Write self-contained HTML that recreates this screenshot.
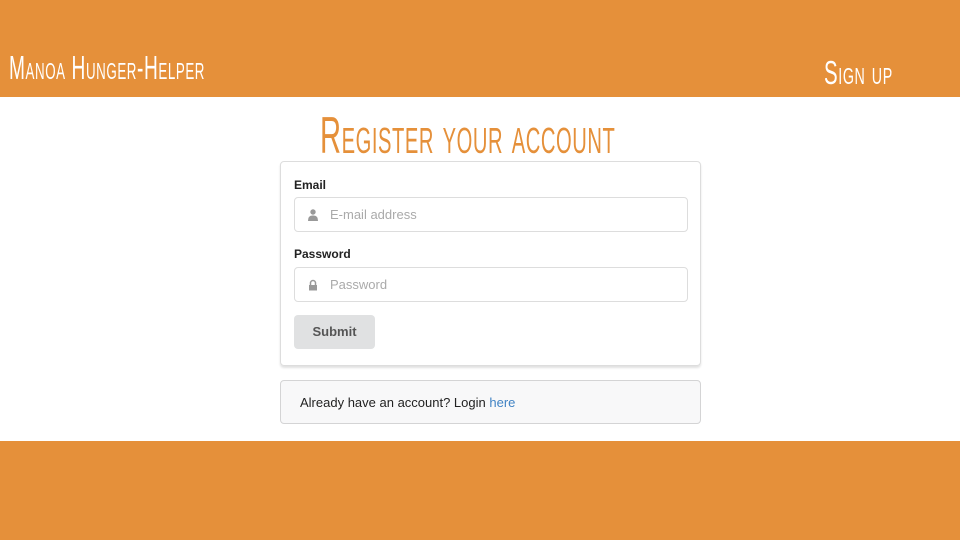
<!DOCTYPE html>
<html><head><style>
*{margin:0;padding:0;box-sizing:border-box}
body{width:960px;height:540px;background:#fff;font-family:"Liberation Sans",sans-serif;position:relative;overflow:hidden}
.hdr{position:absolute;left:0;top:0;width:960px;height:97px;background:#e5903a}
.ftr{position:absolute;left:0;top:441px;width:960px;height:99px;background:#e5903a}
.sc{position:absolute;font-family:"Liberation Sans Narrow","Liberation Sans",sans-serif;font-variant:small-caps;transform-origin:left top;white-space:nowrap;letter-spacing:1px}
.card{position:absolute;left:280px;top:161px;width:421px;height:205px;border:1px solid #ddd;border-radius:4px;box-shadow:0 2px 2px rgba(0,0,0,.12)}
.lbl{position:absolute;left:13px;font-size:12px;font-weight:bold;color:#222}
.inp{position:absolute;left:13px;width:394px;height:35px;border:1px solid #ddd;border-radius:4px}
.inp span{position:absolute;left:35px;top:9px;font-size:13px;color:#aaa}
.btn{position:absolute;left:13px;top:153px;width:81px;height:34px;background:#e0e1e2;border-radius:4px;font-size:13px;font-weight:bold;color:#555;text-align:center;line-height:34px}
.msg{position:absolute;left:280px;top:380px;width:421px;height:44px;border:1px solid #d4d4d5;border-radius:4px;background:#f8f8f9;font-size:13px;color:#222;padding:14px 0 0 19px}
</style></head><body>
<div class="hdr"></div>
<div class="sc" style="left:9px;top:49px;font-size:33px;color:#fff;transform:scaleX(.58)">Manoa Hunger-Helper</div>
<div class="sc" style="left:824px;top:54px;font-size:33px;color:#fff;transform:scaleX(.62)">Sign up</div>
<div class="sc" style="left:320px;top:106px;font-size:52px;color:#e5903a;transform:scaleX(.56)">Register your account</div>
<div class="card">
<div class="lbl" style="top:16px">Email</div>
<div class="inp" style="top:35px"><svg style="position:absolute;left:13px;top:11px" width="10" height="12" viewBox="0 0 10 12"><circle cx="5" cy="3" r="2.7" fill="#999"/><path d="M0 12 Q0 6 5 6.5 Q10 6 10 12Z" fill="#999"/></svg><span>E-mail address</span></div>
<div class="lbl" style="top:85px">Password</div>
<div class="inp" style="top:105px"><svg style="position:absolute;left:13px;top:11px" width="10" height="12" viewBox="0 0 10 12"><path d="M2.5 6V4a2.5 2.5 0 0 1 5 0v2" stroke="#999" stroke-width="1.5" fill="none"/><rect x="1" y="6" width="8" height="5.5" fill="#999"/></svg><span>Password</span></div>
<div class="btn">Submit</div>
</div>
<div class="msg">Already have an account? Login <span style="color:#4183c4">here</span></div>
<div class="ftr"></div>
</body></html>
